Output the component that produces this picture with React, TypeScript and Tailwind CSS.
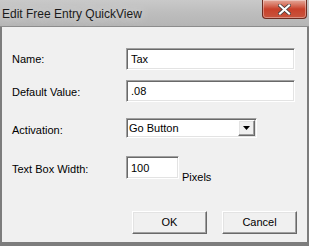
export default function App() {
  const sunken =
    "border border-t-[#a0a0a0] border-l-[#a0a0a0] border-b-white border-r-white bg-white shadow-[inset_1px_1px_0_#696969,inset_-1px_-1px_0_#e3e3e3]";
  const raised =
    "border border-t-white border-l-white border-b-[#696969] border-r-[#696969] bg-[#f0f0f0] shadow-[inset_-1px_-1px_0_#a0a0a0,inset_1px_1px_0_#e3e3e3]";

  return (
    <div className="w-[309px] h-[246px] bg-[#7d7d7d] flex flex-col overflow-hidden font-['Liberation_Sans',Arial,sans-serif] text-[11px] leading-[13px] text-black">
      {/* Title bar */}
      <div className="h-[27px] shrink-0 flex items-start justify-between bg-gradient-to-b from-[#c9c9c9] via-[#bdbdbd] to-[#b5b5b5] border-b border-[#8c8c8c]">
        <span className="pl-[2px] pt-[7px] text-[12px] leading-[14px] text-[#1a1a1a] [text-shadow:0_0_8px_#e6e6e6]">
          Edit Free Entry QuickView
        </span>
        <div className="mr-[2px] w-[45px] h-[19px] rounded-b-[4px] border border-t-0 border-[#6b2b20] bg-gradient-to-b from-[#e3a89a] via-[#c8402a] to-[#c8543d] flex items-center justify-center shadow-[inset_0_0_0_1px_rgba(255,255,255,0.35)]">
          <svg width="13" height="11" viewBox="0 0 13 11">
            <path
              d="M2 1.5 L11 9.5 M11 1.5 L2 9.5"
              stroke="#3a3a3a"
              strokeWidth="3.6"
              strokeLinecap="square"
            />
            <path
              d="M2 1.5 L11 9.5 M11 1.5 L2 9.5"
              stroke="#ffffff"
              strokeWidth="2.2"
              strokeLinecap="square"
            />
          </svg>
        </div>
      </div>

      {/* Client area */}
      <div className="mx-[2px] mb-[4px] flex-1 bg-[#f0f0f0] pt-[21px] pl-[10px] flex flex-col">
        <div className="flex items-center h-[22px]">
          <span className="w-[114px]">Name:</span>
          <div className={`${sunken} w-[169px] h-[22px] px-[4px] flex items-center`}>Tax</div>
        </div>

        <div className="flex items-center h-[22px] mt-[10px]">
          <span className="w-[114px] pt-[2px]">Default Value:</span>
          <div className={`${sunken} w-[169px] h-[22px] px-[4px] flex items-center`}>.08</div>
        </div>

        <div className="flex items-center h-[20px] mt-[16px]">
          <span className="w-[114px] pt-[4px]">Activation:</span>
          <div className={`${sunken} w-[131px] h-[20px] pl-[2px] pr-[1px] flex items-center justify-between`}>
            <span>Go Button</span>
            <div className={`${raised} w-[17px] h-[16px] flex items-center justify-center`}>
              <svg width="7" height="4" viewBox="0 0 7 4">
                <path d="M0 0 H7 L3.5 4 Z" fill="#000" />
              </svg>
            </div>
          </div>
        </div>

        <div className="flex items-start h-[23px] mt-[18px]">
          <span className="w-[114px] pt-[7px]">Text Box Width:</span>
          <div className={`${sunken} w-[53px] h-[23px] px-[4px] pt-[5px]`}>100</div>
          <span className="ml-[3px] pt-[15px]">Pixels</span>
        </div>

        <div className="flex mt-[32px] pl-[120px] gap-[15px]">
          <button className={`${raised} w-[75px] h-[23px]`}>OK</button>
          <button className={`${raised} w-[75px] h-[23px]`}>Cancel</button>
        </div>
      </div>
    </div>
  );
}
